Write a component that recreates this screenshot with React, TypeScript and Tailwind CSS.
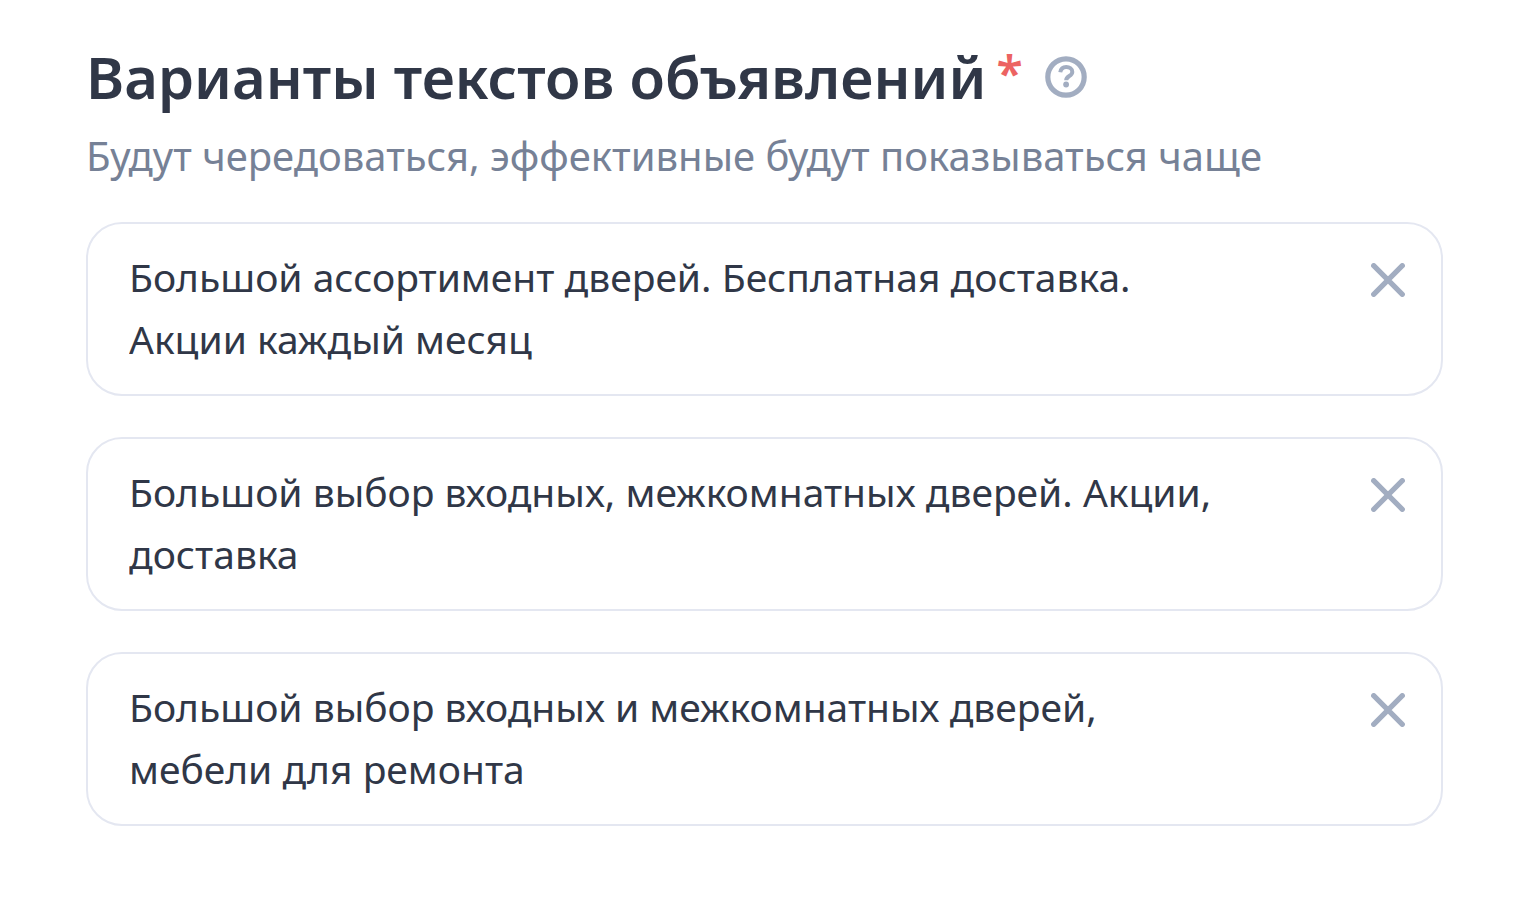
import React, { useState } from 'react';

const INITIAL_TEXTS = [
    'Большой ассортимент дверей. Бесплатная доставка. Акции каждый месяц',
    'Большой выбор входных, межкомнатных дверей. Акции, доставка',
    'Большой выбор входных и межкомнатных дверей, мебели для ремонта',
];

const HelpIcon: React.FC = () => (
    <svg viewBox="0 0 42 42" className="w-[42px] h-[42px]" fill="none" aria-hidden="true">
        <circle cx="21" cy="21" r="18.2" stroke="currentColor" strokeWidth="5.2" />
        <path d="M15.3 16.3c.5-3.2 2.700-5.200 5.900-5.200 3.400 0 6.100 1.900 6.100 4.800 0 4.300-6.100 3.900-6.100 8.400" stroke="currentColor" strokeWidth="4" />
        <circle cx="21.100" cy="28.500" r="2.900" fill="currentColor" />
    </svg>
);

const CrossIcon: React.FC = () => (
    <svg viewBox="0 0 34 34" className="w-[34px] h-[34px]" fill="none" aria-hidden="true">
        <path d="M2.700 2.700 31.300 31.300M31.300 2.700 2.700 31.300" stroke="currentColor" strokeWidth="5.200" strokeLinecap="round" />
    </svg>
);

interface TextVariantProps {
    index: number;
    value: string;
    onChange: (value: string) => void;
}

const TextVariant: React.FC<TextVariantProps> = ({ index, value, onChange }) => (
    <div className="flex items-start rounded-[36px] border-2 border-[#e4e7f1] pt-[22px] pb-6 pl-[41px] pr-9">
        <textarea
            aria-label={`Вариант текста ${index + 1}`}
            rows={2}
            value={value}
            onChange={e => onChange(e.target.value)}
            className="block flex-1 min-w-0 resize-none overflow-hidden bg-transparent pr-[136px] text-[39px] leading-[62px] outline-none"
        />
        <button type="button" aria-label="Очистить" onClick={() => onChange('')} className="mt-[17px] cursor-pointer text-[#a2adc1]">
            <CrossIcon />
        </button>
    </div>
);

const App: React.FC = () => {
    const [texts, setTexts] = useState<string[]>(INITIAL_TEXTS);

    const updateText = (index: number, value: string) => {
        setTexts(prev => prev.map((t, i) => (i === index ? value : t)));
    };

    return (
        <main className="bg-white pl-[86px] pr-[87px] pt-[38px] pb-[72px] font-['Noto_Sans',sans-serif] text-[#303747]">
            <header className="flex items-center">
                <h1 className="flex items-start gap-[10px] text-[58px] leading-[78px] font-semibold">
                    Варианты текстов объявлений
                    <span className="text-[48px] leading-[70px] text-[#ec6362]">*</span>
                </h1>
                <button type="button" aria-label="Подсказка" className="ml-[22px] cursor-pointer text-[#a2adc1]">
                    <HelpIcon />
                </button>
            </header>
            <p className="mt-[10px] text-[40px] leading-[60px] text-[#768196]">
                Будут чередоваться, эффективные будут показываться чаще
            </p>
            <div className="mt-9 flex flex-col gap-[41px]">
                {texts.map((text, i) => (
                    <TextVariant key={i} index={i} value={text} onChange={value => updateText(i, value)} />
                ))}
            </div>
        </main>
    );
};

export default App;
